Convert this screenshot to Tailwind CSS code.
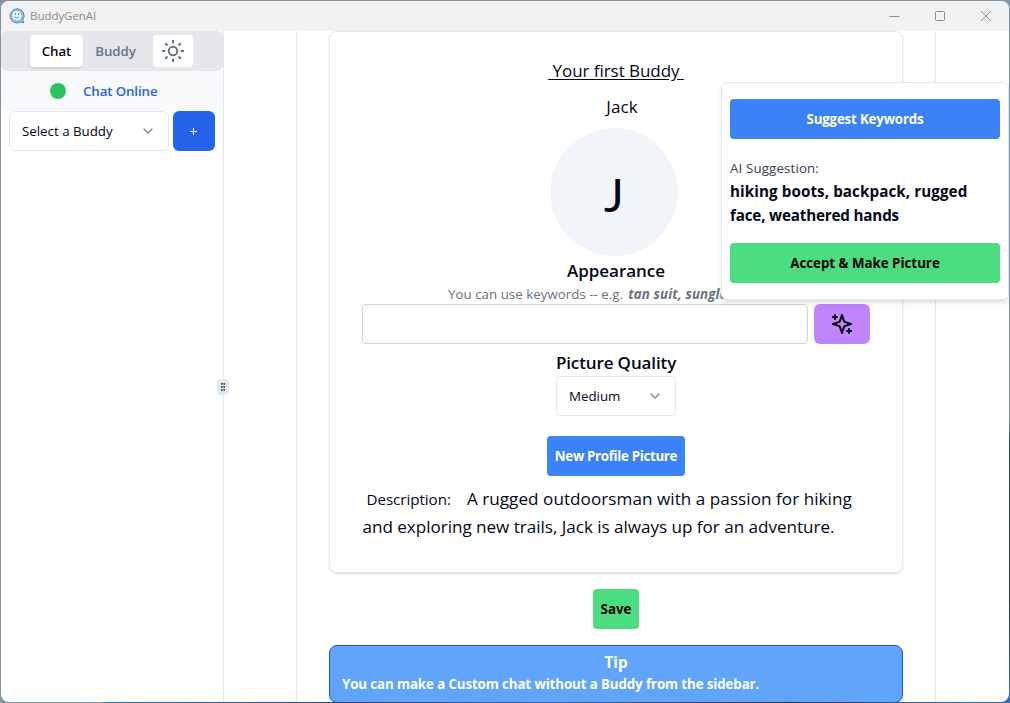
<!DOCTYPE html>
<html lang="en">
<head>
<meta charset="utf-8">
<title>BuddyGenAI</title>
<script src="https://cdn.jsdelivr.net/npm/@tailwindcss/browser@4"></script>
</head>
<body class="h-[703px] w-[1010px] overflow-hidden bg-[linear-gradient(to_right,#8497a3_0,#8497a3_10%,#2f79b0_10.5%,#2c5a9e_25%,#2b4580_34%,#3468a8_55%,#2b3656_78%,#2f6fb5_94%)] p-px font-['Open_Sans','Noto_Sans',sans-serif] text-[#020817]">
<div class="absolute inset-x-0 top-0 h-[690px] bg-[linear-gradient(to_bottom,#7d97ab_0%,#8497a8_60%,#2e4a7a_64%,#2b3656_86%,#2f6fb5_100%)]"></div>
<div class="absolute top-0 left-0 h-[690px] w-5 bg-[#8093a1]"></div>
<div class="relative flex h-[701px] w-[1008px] flex-col overflow-hidden rounded-lg bg-white">
  <header class="flex h-[30px] shrink-0 items-center bg-[#f2f2f2] pl-2 text-[#8b8b8b]">
    <svg class="size-4" viewBox="0 0 16 16"><path d="M8 .8a7.1 7.1 0 1 0 3.8 13.2l2.8.9-.7-3A7.1 7.1 0 0 0 8 .8Z" fill="#8fc3e6" stroke="#4583b0" stroke-width=".9"/><circle cx="7.9" cy="7.7" r="5.1" fill="#f1f9fe" stroke="#5a9ac6" stroke-width=".5"/><path d="M6.300 5.300v1.600M9.500 5.300v1.600" stroke="#35627f" stroke-width="1"/><path d="M5.500 8.800q2.400 2.400 4.800 0" fill="none" stroke="#4b87b0" stroke-width=".9"/></svg>
    <span class="ml-[5px] text-[11.5px] tracking-[-0.04px] whitespace-nowrap">BuddyGenAI</span>
    <div class="ml-auto flex items-center gap-[35px] pr-[17px]">
      <svg class="size-[11px]" viewBox="0 0 11 11" fill="none" stroke="currentColor"><path d="M.5 5.500h10"/></svg>
      <svg class="size-[11px]" viewBox="0 0 11 11" fill="none" stroke="currentColor"><rect x=".5" y=".5" width="9" height="9" rx="1"/></svg>
      <svg class="size-[11px]" viewBox="0 0 11 11" fill="none" stroke="currentColor"><path d="M0 0l10 10M10 0L0 10"/></svg>
    </div>
  </header>
  <div class="flex min-h-0 flex-1">
    <aside class="w-[222px] shrink-0">
      <div class="flex h-10 items-center rounded-md bg-[#e5e7eb] pl-[29px] text-[13.3px] font-semibold text-[#64748b]">
        <div class="flex h-8 w-[53px] items-center justify-center rounded bg-white pt-0.5 tracking-[-0.1px] text-[#020817] shadow-sm">Chat</div>
        <div class="flex h-8 w-[65px] items-center justify-center pt-0.5 tracking-[-0.1px]">Buddy</div>
        <div class="ml-[5px] flex h-8 w-10 items-center justify-center rounded bg-white">
          <svg class="size-6" viewBox="0 0 24 24" fill="none" stroke="currentColor" stroke-width="2"><circle cx="12" cy="12" r="4.200"/><path d="M12 1v3.200M12 19.800V23M1 12h3.200M19.800 12H23M4.200 4.200l2.300 2.300M17.500 17.500l2.300 2.300M4.200 19.800l2.300-2.300M17.500 6.500l2.300-2.300"/></svg>
        </div>
      </div>
      <div class="flex h-10 items-center rounded-md bg-[#f8fafc] pl-[49px]">
        <div class="size-4 rounded-full bg-[#22c55e]"></div>
        <span class="ml-[17px] pt-0.5 text-[13.3px] font-semibold tracking-[-0.12px] text-[#2563eb]">Chat Online</span>
      </div>
      <div class="flex gap-1 pl-2">
        <div class="flex h-10 w-40 items-center justify-between rounded-md border border-[#e2e8f0] px-3 text-[13.3px]"><span class="pt-0.5">Select a Buddy</span>
          <svg class="size-4 text-[#808590]" viewBox="0 0 24 24" fill="none" stroke="currentColor" stroke-width="2" stroke-linecap="round" stroke-linejoin="round"><path d="m6 9 6 6 6-6"/></svg></div>
        <div class="flex h-10 w-[42px] items-center justify-center rounded-md bg-[#2563eb] text-white"><svg class="mr-px size-[9px]" viewBox="0 0 9 9" stroke="currentColor"><path d="M4.500 1v7M1 4.500h7"/></svg></div>
      </div>
    </aside>
    <div class="relative w-px shrink-0 bg-[#e2e8f0]">
      <div class="absolute top-[348px] -left-[6px] flex h-4 w-3 items-center justify-center rounded-sm bg-[#e2e8f0]"><svg class="h-[8px] w-[4px]" viewBox="0 0 4 8" fill="#334155"><path d="M0 0h1.600v1.800H0zM2.400 0H4v1.800H2.400zM0 3h1.600v1.800H0zM2.400 3H4v1.800H2.400zM0 6h1.600v1.800H0zM2.400 6H4v1.800H2.400z"/></svg></div>
    </div>
    <main class="ml-[72px] flex w-[640px] shrink-0 flex-col items-center border-x border-[#e2e8f0]">
      <section class="flex h-[542px] w-[574px] shrink-0 flex-col items-center rounded-lg border border-[#e2e8f0] shadow-sm">
        <h1 class="mt-[25px] h-7 text-[17px] leading-7 tracking-[-0.05px] whitespace-pre underline underline-offset-2"> Your first Buddy </h1>
        <div class="mt-2 ml-3 h-7 text-[17px] leading-7 tracking-[0.1px]">Jack</div>
        <div class="mt-[7px] mr-1 flex size-32 items-center justify-center rounded-full bg-[#f1f5f9] pt-1 font-['Lato'] text-[47px]">J</div>
        <h2 class="h-7 pt-px text-[17px] leading-7 font-semibold tracking-[-0.05px]">Appearance</h2>
        <p class="flex h-5 w-[336px] gap-[5px] text-[13.3px] leading-5 whitespace-nowrap text-[#6b7280]"><span class="tracking-[0.03px]">You can use keywords -- e.g.</span><span class="font-bold tracking-[0.15px] italic">tan suit, sunglasses</span></p>
        <div class="flex gap-1.5">
          <div class="h-10 w-[446px] rounded border border-[#d1d5db]"></div>
          <div class="flex h-10 w-14 items-center justify-center rounded-md bg-[#c084fc] text-black">
            <svg class="size-6" viewBox="0 0 24 24" fill="none" stroke="currentColor" stroke-width="2" stroke-linecap="round" stroke-linejoin="round"><path d="m12 3-1.900 5.800a2 2 0 0 1-1.300 1.300L3 12l5.800 1.900a2 2 0 0 1 1.300 1.300L12 21l1.900-5.800a2 2 0 0 1 1.300-1.300L21 12l-5.800-1.900a2 2 0 0 1-1.300-1.300Z"/><path d="M5 3v4M19 17v4M3 5h4M17 19h4"/></svg>
          </div>
        </div>
        <h2 class="mt-1 h-7 pt-px text-[17px] leading-7 font-semibold tracking-[-0.12px]">Picture Quality</h2>
        <div class="flex h-10 w-[120px] items-center justify-between rounded-md border border-[#e2e8f0] px-3 text-[13.3px]"><span class="pt-0.5">Medium</span>
          <svg class="size-4 text-[#808590]" viewBox="0 0 24 24" fill="none" stroke="currentColor" stroke-width="2" stroke-linecap="round" stroke-linejoin="round"><path d="m6 9 6 6 6-6"/></svg></div>
        <div class="mt-5 flex h-10 w-[138px] items-center justify-center rounded bg-[#3b82f6] pt-0.5 text-[13.3px] font-bold tracking-[-0.32px] whitespace-nowrap text-white">New Profile Picture</div>
        <div class="mt-[9px] w-[507px] text-[17.100px] leading-7 whitespace-nowrap">
          <div class="flex gap-4 pl-1"><span class="text-[15.200px] tracking-[-0.06px]">Description:</span><span class="tracking-[0.05px]">A rugged outdoorsman with a passion for hiking</span></div>
          <div class="tracking-[-0.03px]">and exploring new trails, Jack is always up for an adventure.</div>
        </div>
      </section>
      <div class="mt-4 flex h-10 w-[46px] shrink-0 items-center justify-center rounded bg-[#4ade80] pt-0.5 text-[13.3px] font-bold text-black">Save</div>
      <div class="mt-4 h-[58px] w-[574px] shrink-0 rounded-lg border border-[#1d4ed8] bg-[#60a5fa] px-3 pt-1 font-bold whitespace-nowrap text-white">
        <div class="text-center text-[15.200px] leading-6">Tip</div>
        <div class="text-[13.3px] leading-5 tracking-[-0.1px]">You can make a Custom chat without a Buddy from the sidebar.</div>
      </div>
    </main>
  </div>
  <div class="absolute top-[81px] left-[720px] flex h-[218px] w-[288px] flex-col rounded-md border border-[#e2e8f0] bg-white px-2 pt-4 whitespace-nowrap shadow-md">
    <div class="flex h-10 items-center justify-center rounded bg-[#3b82f6] pt-0.5 text-[13.3px] font-bold tracking-[-0.18px] text-white">Suggest Keywords</div>
    <div class="mt-[19px] mb-px text-[13.3px] leading-5 tracking-[0.14px] text-[#374151]">AI Suggestion:</div>
    <div class="text-[15.200px] leading-6 font-bold"><span class="tracking-[0.08px]">hiking boots, backpack, rugged</span><br><span class="tracking-[-0.17px]">face, weathered hands</span></div>
    <div class="mt-4 flex h-10 items-center justify-center rounded bg-[#4ade80] pt-0.5 text-[13.3px] font-bold text-black">Accept &amp; Make Picture</div>
  </div>
</div>
</body>
</html>
